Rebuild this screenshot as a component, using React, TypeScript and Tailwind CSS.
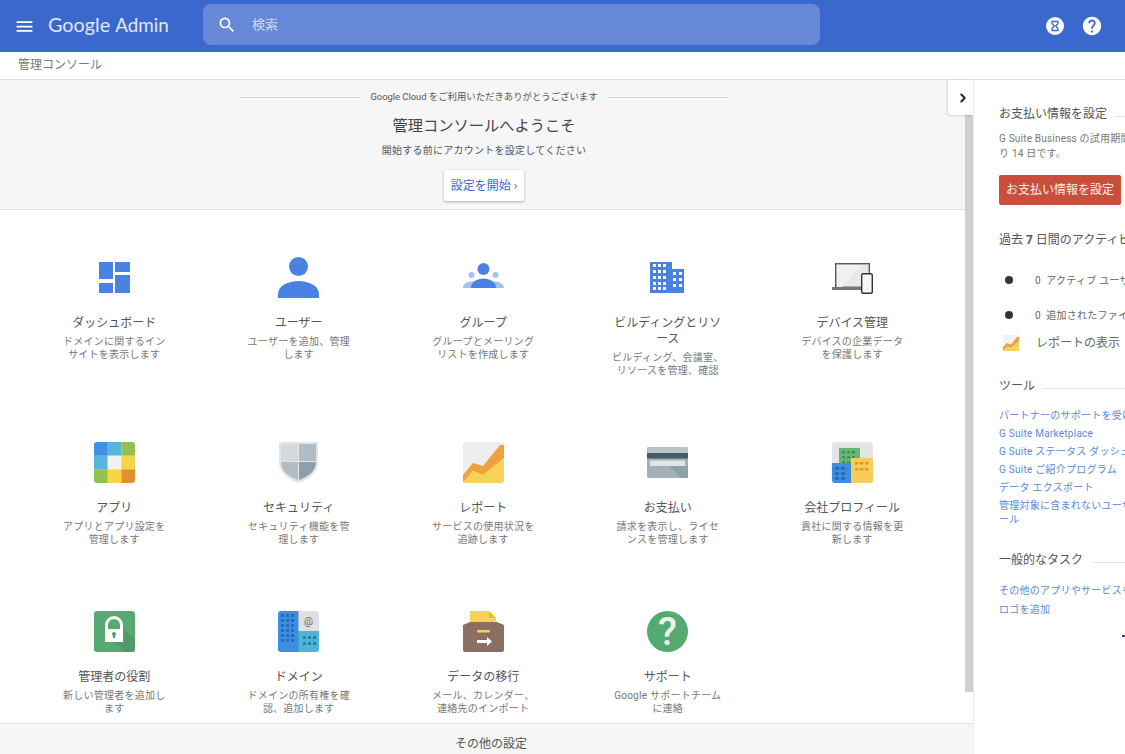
import React from "react";
import { MdHelp, MdMenu, MdSearch } from "react-icons/md";
import { ChevronRight } from "lucide-react";

const FONT = "font-['Roboto','Noto_Sans_CJK_JP',sans-serif]";

const DashboardIcon = () => (
  <svg viewBox="0 0 41 41" className="w-[41px] h-[41px]">
    <g fill="#4a82e4">
      <rect x="5" y="5" width="14" height="17" />
      <rect x="21" y="5" width="15" height="10" />
      <rect x="5" y="26" width="14" height="10" />
      <rect x="21" y="18" width="15" height="18" />
    </g>
  </svg>
);

const UserIcon = () => (
  <svg viewBox="0 0 41 41" className="w-[41px] h-[41px]">
    <circle cx="20.5" cy="9.5" r="9.5" fill="#4a82e4" />
    <path d="M0 41V37C0 29 10 24 20.5 24S41 29 41 37V41Z" fill="#4a82e4" />
  </svg>
);

const GroupIcon = () => (
  <svg viewBox="0 0 41 41" className="w-[41px] h-[41px]">
    <circle cx="8.5" cy="18" r="3" fill="#a4c0f2" />
    <circle cx="32.5" cy="18" r="3" fill="#a4c0f2" />
    <path d="M0 31C0 27 4 24.5 9 24.5H32C37 24.5 41 27 41 31Z" fill="#a4c0f2" />
    <circle cx="20.5" cy="12" r="6" fill="#4a82e4" />
    <path d="M8 31C8 25 14 21.5 20.5 21.5S33 25 33 31Z" fill="#4a82e4" />
  </svg>
);

const BuildingIcon = () => {
  const tall = [7, 13, 19, 25, 30];
  return (
    <svg viewBox="0 0 41 41" className="w-[41px] h-[41px]">
      <path d="M3 5H25V12H37V36H3Z" fill="#4a82e4" />
      <g fill="#fff">
        {tall.map((y) =>
          [6, 11, 16].map((x) => (
            <rect key={`${x}-${y}`} x={x} y={y} width="3" height="3" />
          )),
        )}
        {[15, 21, 27].map((y) =>
          [26, 32].map((x) => (
            <rect key={`${x}-${y}`} x={x} y={y} width="3" height="3" />
          )),
        )}
      </g>
    </svg>
  );
};

const DeviceIcon = () => (
  <svg viewBox="0 0 41 41" className="w-[41px] h-[41px]">
    <rect x="3.7" y="6.7" width="33.6" height="23.6" fill="#e8e8e8" stroke="#5a5a5a" strokeWidth="1.4" />
    <path d="M5 8H30L10 30H5Z" fill="#f0f0f0" />
    <rect x="0" y="30" width="31" height="3" fill="#757575" />
    <rect x="29.7" y="16.7" width="10.6" height="19.6" rx="1.5" fill="#f5f5f5" stroke="#333" strokeWidth="1.4" />
  </svg>
);

const AppsIcon = () => {
  const cells = ["#4390e2", "#55b6da", "#93c150", "#55b6da", "#f1f1f1", "#f4d545", "#93c150", "#f4d545", "#e5902e"];
  return (
    <svg viewBox="0 0 41 41" className="w-[41px] h-[41px] rounded-[3px]">
      {cells.map((c, i) => (
        <rect key={i} x={(i % 3) * 13.67} y={Math.floor(i / 3) * 13.67} width="13.8" height="13.8" fill={c} />
      ))}
    </svg>
  );
};

const SecurityIcon = () => (
  <svg viewBox="0 0 41 41" className="w-[41px] h-[41px]">
    <path d="M1 0H40V20C40 31 30 38 20.5 41C11 38 1 31 1 20Z" fill="#e2e5e7" />
    <path d="M3 2H20V19H3Z" fill="#d3d9dc" />
    <path d="M21 2H38V19H21Z" fill="#b1bdc4" />
    <path d="M3 20H20V38C12 35 3 30 3 20Z" fill="#b1bdc4" />
    <path d="M21 20H38C38 30 29 35 21 38Z" fill="#8da0ab" />
  </svg>
);

const ReportIcon = () => (
  <svg viewBox="0 0 41 41" className="w-[41px] h-[41px] rounded-[3px]">
    <rect width="41" height="41" fill="#eeeeee" />
    <path d="M0 33L10 21L20 24L37 3H41V16L20 33L10 29L0 41Z" fill="#f0a03c" />
    <path d="M0 41L10 29L20 33L41 16V41Z" fill="#f7d258" />
  </svg>
);

const BillingIcon = () => (
  <svg viewBox="0 0 41 41" className="w-[41px] h-[41px]">
    <rect y="5" width="41" height="31" rx="2" fill="#a3b0b7" />
    <rect y="5" width="41" height="6" rx="2" fill="#b8c2c8" />
    <path d="M22 24H41V36H34Z" fill="#90a0a9" />
    <rect y="11" width="41" height="5.5" fill="#465a65" />
    <rect x="3" y="18.5" width="35" height="5.5" fill="#dfe4e7" />
  </svg>
);

const CompanyIcon = () => (
  <svg viewBox="0 0 41 41" className="w-[41px] h-[41px] rounded-[3px]">
    <rect width="41" height="41" fill="#e4e4e4" />
    <rect x="7" y="6" width="21" height="35" fill="#66b676" />
    <g fill="#3f9355">
      {[9, 14, 19].map((y) =>
        [10, 15, 20].map((x) => <rect key={`${x}-${y}`} x={x} y={y} width="3" height="2.5" />),
      )}
    </g>
    <rect y="21" width="19" height="20" fill="#3b8ee0" />
    <g fill="#2b6cb8">
      {[25, 30, 35].map((y) =>
        [3, 9].map((x) => <rect key={`${x}-${y}`} x={x} y={y} width="4" height="3" />),
      )}
    </g>
    <rect x="19" y="16" width="22" height="25" fill="#f6cd56" />
    <g fill="#d99a33">
      {[20, 26].map((y) =>
        [23, 28, 33].map((x) => <rect key={`${x}-${y}`} x={x} y={y} width="3.5" height="2.5" />),
      )}
    </g>
  </svg>
);

const AdminIcon = () => (
  <svg viewBox="0 0 41 41" className="w-[41px] h-[41px] rounded-[3px]">
    <rect width="41" height="41" fill="#57a972" />
    <path d="M30 18V30H20L31 41H41V29Z" fill="#4f9a68" />
    <path d="M11 31V14A9 9 0 0 1 29 14V31Z" fill="#fff" />
    <path d="M14 18V14A6 6 0 0 1 26 14V18Z" fill="#57a972" />
    <circle cx="20" cy="23" r="2" fill="#4f9a68" />
    <rect x="19" y="23" width="2" height="4" fill="#4f9a68" />
  </svg>
);

const DomainIcon = () => (
  <svg viewBox="0 0 41 41" className="w-[41px] h-[41px] rounded-[3px]">
    <rect width="41" height="41" fill="#e0e0e0" />
    <rect x="20" y="20" width="21" height="21" fill="#4db4d8" />
    <rect width="20.5" height="41" fill="#3b8ee0" />
    <g fill="#2b6cb8">
      {[3, 8, 13, 18, 23, 28].map((y) =>
        [3, 8, 13].map((x) => <rect key={`${x}-${y}`} x={x} y={y} width="3" height="3" />),
      )}
    </g>
    <g fill="#2f7ca0">
      {[25, 31].map((y) =>
        [25, 30, 35].map((x) => <rect key={`${x}-${y}`} x={x} y={y} width="3" height="3" />),
      )}
    </g>
    <text x="30.5" y="14" textAnchor="middle" fontSize="10" fontFamily="Roboto, sans-serif" fill="#666">
      @
    </text>
  </svg>
);

const MigrationIcon = () => (
  <svg viewBox="0 0 41 41" className="w-[41px] h-[41px]">
    <path d="M7 0H26L33 7V14H7Z" fill="#f7d258" />
    <path d="M26 0L33 7H26Z" fill="#e3bc45" />
    <path d="M0 14L7 11H34L41 14V39A2 2 0 0 1 39 41H2A2 2 0 0 1 0 39Z" fill="#8d6e63" />
    <rect x="14" y="19" width="13" height="2.5" rx="1" fill="#f7d258" />
    <path d="M14 29H24V26L29 30.5L24 35V32H14Z" fill="#fff" />
  </svg>
);

const SupportIcon = () => (
  <svg viewBox="0 0 41 41" className="w-[41px] h-[41px]">
    <circle cx="20.5" cy="20.5" r="20.5" fill="#57a972" />
    <text x="20.5" y="34" textAnchor="middle" fontSize="39" fontWeight="500" fontFamily="Roboto, sans-serif" fill="#e8f3ec">
      ?
    </text>
  </svg>
);

const SmallReportIcon = () => (
  <svg viewBox="0 0 16 16" className="w-4 h-4">
    <rect width="16" height="16" fill="#f2f2f2" />
    <path d="M0 12L4 8L8 9.5L14 2H16V6L8 13L4 11.5L0 16Z" fill="#f0a03c" />
    <path d="M0 16L4 11.5L8 13L16 6V16Z" fill="#f7d258" />
  </svg>
);

const HourglassBadge = () => (
  <svg viewBox="0 0 18 18" className="w-[18px] h-[18px]">
    <circle cx="9" cy="9" r="9" fill="#fff" />
    <path
      d="M6 4.5H12V6.5L9.7 9L12 11.5V13.5H6V11.5L8.3 9L6 6.5Z"
      fill="none"
      stroke="#3b68cc"
      strokeWidth="1.3"
    />
  </svg>
);

const items = [
  { title: "ダッシュボード", desc: "ドメインに関するイン\nサイトを表示します", icon: <DashboardIcon /> },
  { title: "ユーザー", desc: "ユーザーを追加、管理\nします", icon: <UserIcon /> },
  { title: "グループ", desc: "グループとメーリング\nリストを作成します", icon: <GroupIcon /> },
  { title: "ビルディングとリソ\nース", desc: "ビルディング、会議室、\nリソースを管理、確認", icon: <BuildingIcon /> },
  { title: "デバイス管理", desc: "デバイスの企業データ\nを保護します", icon: <DeviceIcon /> },
  { title: "アプリ", desc: "アプリとアプリ設定を\n管理します", icon: <AppsIcon /> },
  { title: "セキュリティ", desc: "セキュリティ機能を管\n理します", icon: <SecurityIcon /> },
  { title: "レポート", desc: "サービスの使用状況を\n追跡します", icon: <ReportIcon /> },
  { title: "お支払い", desc: "請求を表示し、ライセ\nンスを管理します", icon: <BillingIcon /> },
  { title: "会社プロフィール", desc: "貴社に関する情報を更\n新します", icon: <CompanyIcon /> },
  { title: "管理者の役割", desc: "新しい管理者を追加し\nます", icon: <AdminIcon /> },
  { title: "ドメイン", desc: "ドメインの所有権を確\n認、追加します", icon: <DomainIcon /> },
  { title: "データの移行", desc: "メール、カレンダー、\n連絡先のインポート", icon: <MigrationIcon /> },
  { title: "サポート", desc: "Google サポートチーム\nに連絡", icon: <SupportIcon /> },
];

const SectionHeading = ({ children }: { children: React.ReactNode }) => (
  <div className="flex items-center gap-[9px] w-[300px]">
    <h3 className="text-[12px] leading-[18px] text-[#555] whitespace-nowrap">{children}</h3>
    <div className="flex-1 h-px bg-[#e4e4e4] mt-1" />
  </div>
);

const SideLink = ({ children }: { children: React.ReactNode }) => (
  <a className="block w-[300px] text-[10px] tracking-[0.25px] leading-[14px] text-[#5a88d8] whitespace-pre">{children}</a>
);

export default function App() {
  return (
    <div className={`h-[754px] w-[1125px] overflow-hidden flex flex-col bg-white ${FONT}`}>
      {/* top bar */}
      <header className="h-[52px] shrink-0 bg-[#3b68cc] flex items-center">
        <MdMenu className="ml-[14px] text-white shrink-0" size={21} />
        <div className="ml-[13px] w-[122px] text-[19.8px] text-white/85 whitespace-nowrap font-['Lato',sans-serif] pb-[3px]">
          Google <span className="text-[18.8px]">Admin</span>
        </div>
        <div className="ml-[33px] mb-[3px] w-[617px] h-[41px] rounded-lg bg-[#6688d7] flex items-center">
          <MdSearch className="ml-[14px] text-white" size={20} />
          <span className="ml-[15px] text-[13px] text-white/70">検索</span>
        </div>
        <div className="ml-auto mr-[24px] flex items-center gap-[19px]">
          <HourglassBadge />
          <MdHelp className="text-white -m-[2px]" size={22} />
        </div>
      </header>

      {/* breadcrumb */}
      <div className="h-[28px] shrink-0 bg-white border-b border-[#dcdcdc] shadow-[0_1px_1px_rgba(0,0,0,0.05)] flex items-center pl-[18px] pb-[2px] text-[12px] text-[#777]">
        管理コンソール
      </div>

      <div className="flex-1 min-h-0 flex">
        {/* main column */}
        <div className="relative w-[973px] shrink-0 flex flex-col">
          <div className="flex-1 min-h-0 flex">
            <main className="w-[965px] shrink-0 overflow-hidden">
              <section className="h-[130px] bg-[#f6f6f6] border-b border-[#e2e2e2] flex flex-col items-center pl-[3px] pt-[10px]">
                <div className="flex items-center gap-[10px] w-[490px]">
                  <div className="flex-1 h-px bg-[#dadada]" />
                  <span className="text-[9.4px] leading-[14px] text-[#555] whitespace-nowrap">
                    Google Cloud をご利用いただきありがとうございます
                  </span>
                  <div className="flex-1 h-px bg-[#dadada]" />
                </div>
                <h1 className="mt-[11px] text-[15.25px] leading-[22px] text-[#444]">管理コンソールへようこそ</h1>
                <p className="mt-[6px] text-[10px] tracking-[0.25px] leading-[16px] text-[#555]">
                  開始する前にアカウントを設定してください
                </p>
                <button className="mt-[11px] w-[80px] h-[31px] bg-white rounded-[2px] shadow-[0_1px_3px_rgba(0,0,0,0.3)] text-[12px] text-[#3b68cc]">
                  設定を開始 ›
                </button>
              </section>

              <div className="pl-[22px] pt-[47px] grid grid-cols-[repeat(5,184.5px)] gap-y-[65px]">
                {items.map((item) => (
                  <div key={item.desc} className="flex flex-col items-center text-center">
                    {item.icon}
                    <h2 className="mt-[17px] text-[12px] leading-[16px] text-[#555] whitespace-pre">{item.title}</h2>
                    <p className="mt-[4px] text-[10px] tracking-[0.25px] leading-[13px] text-[#777] whitespace-pre">
                      {item.desc}
                    </p>
                  </div>
                ))}
              </div>
            </main>
            {/* scrollbar */}
            <div className="w-2 shrink-0 bg-white">
              <div className="h-[612px] bg-[#cfcfcf]" />
            </div>
          </div>

          <div className="h-[31px] shrink-0 bg-[#f6f6f6] border-t border-[#e0e0e0] flex items-center justify-center pl-[9px] pt-[9px] text-[12px] text-[#555]">
            その他の設定
          </div>

          {/* panel toggle */}
          <button className="absolute left-[948px] top-0 w-[25px] h-[35px] bg-white rounded-bl-[3px] shadow-[-1px_1px_2px_rgba(0,0,0,0.15)] flex items-center justify-center pl-[5px]">
            <ChevronRight size={14} strokeWidth={3.2} className="text-[#222]" />
          </button>
        </div>

        {/* right panel */}
        <aside className="flex-1 min-w-0 overflow-hidden bg-white pl-[26px] pt-[25px] shadow-[inset_1px_0_0_#ececec]">
          <SectionHeading>お支払い情報を設定</SectionHeading>
          <p className="mt-[8px] text-[10px] tracking-[0.2px] leading-[15px] text-[#777] whitespace-pre">
            {"G Suite Business の試用期間は残\nり 14 日です。"}
          </p>
          <button className="mt-[14px] w-[122px] h-[30px] bg-[#c94f3b] rounded-[2px] text-[12px] text-white/90 whitespace-nowrap">
            お支払い情報を設定
          </button>

          <div className="mt-[26px] text-[12px] leading-[18px] text-[#555] whitespace-nowrap">
            過去 <b>7</b> 日間のアクティビティ
          </div>
          <div className="mt-[23px] h-[16px] flex items-center">
            <span className="ml-[6px] w-2 h-2 shrink-0 rounded-full bg-[#333]" />
            <span className="ml-[22px] shrink-0 text-[10px] text-[#666] whitespace-pre tracking-[0.25px]">0  アクティブ ユーザー</span>
          </div>
          <div className="mt-[19px] h-[16px] flex items-center">
            <span className="ml-[6px] w-2 h-2 shrink-0 rounded-full bg-[#333]" />
            <span className="ml-[22px] shrink-0 text-[10px] text-[#666] whitespace-pre tracking-[0.25px]">0  追加されたファイル</span>
          </div>
          <div className="mt-[8px] h-[24px] flex items-center">
            <span className="ml-[4px] shrink-0">
              <SmallReportIcon />
            </span>
            <span className="ml-[17px] shrink-0 text-[12px] text-[#666] whitespace-nowrap">レポートの表示</span>
          </div>

          <div className="mt-[22px]">
            <SectionHeading>ツール</SectionHeading>
          </div>
          <div className="mt-[14px] flex flex-col gap-y-1">
            <SideLink>パートナーのサポートを受ける</SideLink>
            <SideLink>G Suite Marketplace</SideLink>
            <SideLink>G Suite ステータス ダッシュボード</SideLink>
            <SideLink>G Suite ご紹介プログラム</SideLink>
            <SideLink>データ エクスポート</SideLink>
            <SideLink>{"管理対象に含まれないユーザーのメ\nール"}</SideLink>
          </div>

          <div className="mt-[24px]">
            <SectionHeading>一般的なタスク</SectionHeading>
          </div>
          <div className="mt-[15px] flex flex-col gap-y-[5px]">
            <SideLink>その他のアプリやサービスを追加</SideLink>
            <SideLink>ロゴを追加</SideLink>
          </div>
          <div className="mt-[18px] ml-[123px] w-[3px] h-[2px] bg-[#2a3fb0]" />
        </aside>
      </div>
    </div>
  );
}
